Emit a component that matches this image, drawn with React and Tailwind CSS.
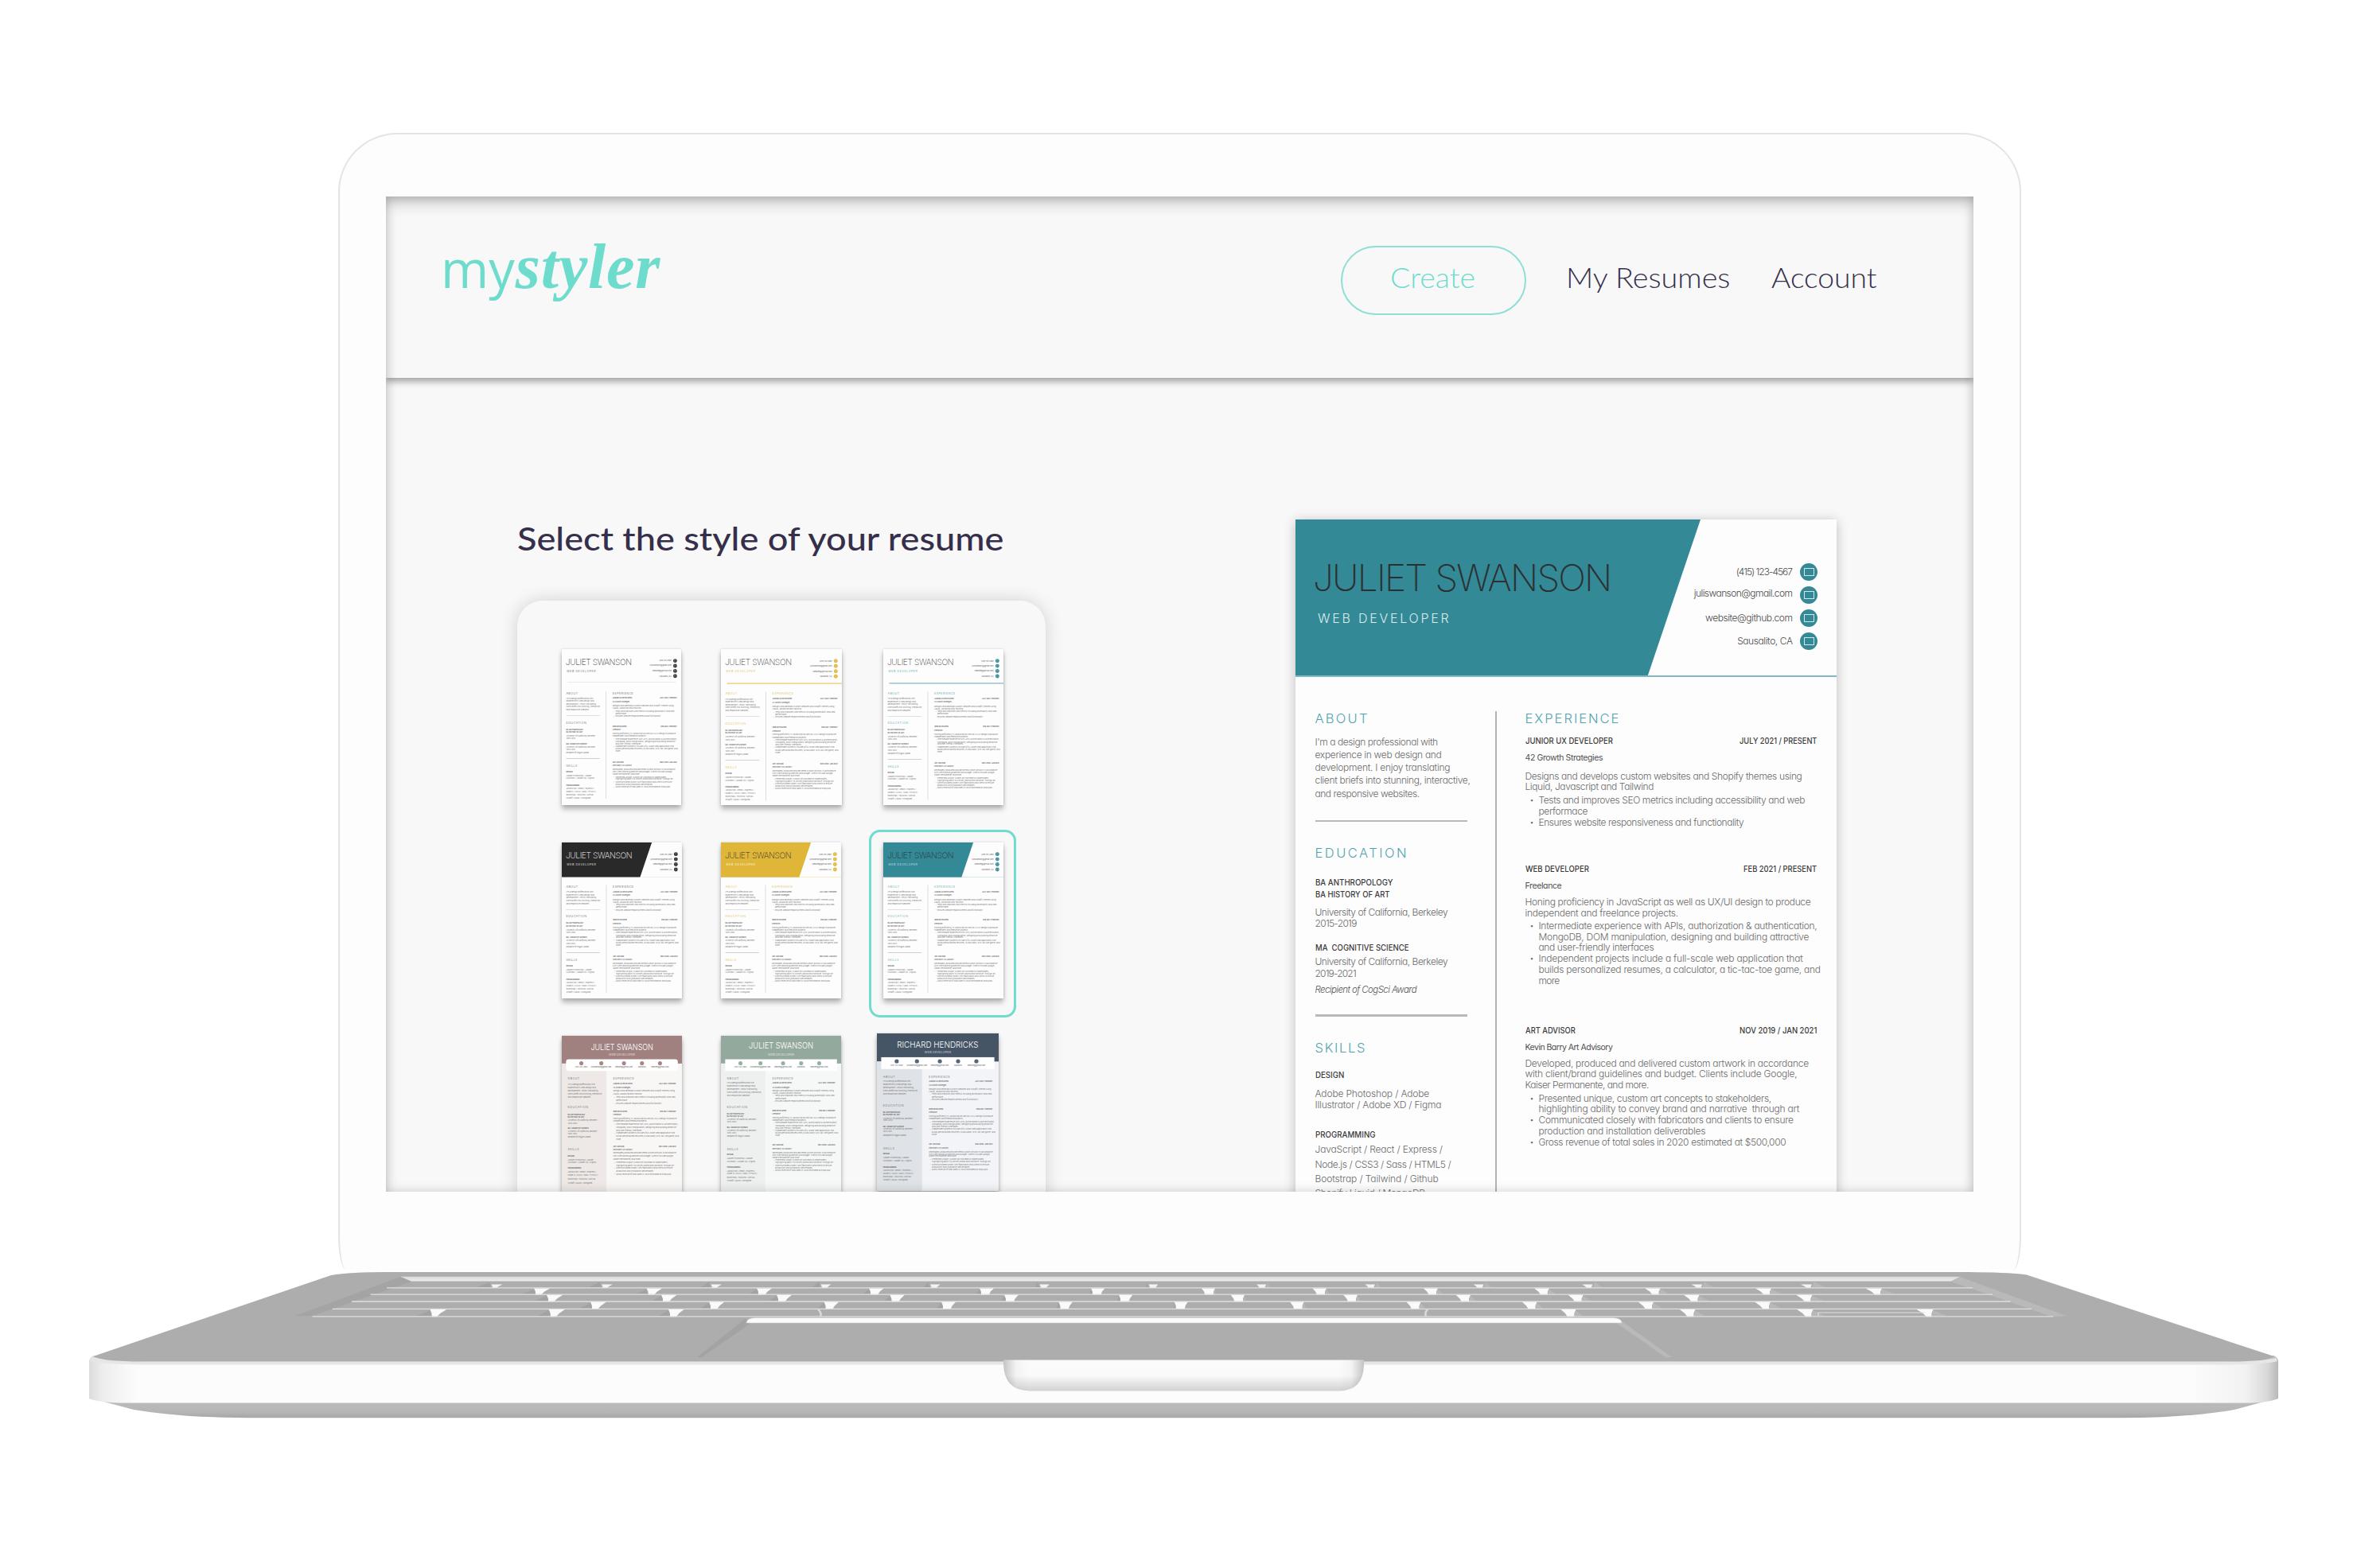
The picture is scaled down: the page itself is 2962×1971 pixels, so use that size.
import React, { useLayoutEffect, useRef } from "react";

/* Single-line text whose ink spans `w` pixels, by tracking or by stretching the letters. */
function Fit({ w, stretch = false, className = "", children }) {
  const ref = useRef(null);
  useLayoutEffect(() => {
    const el = ref.current;
    el.style.letterSpacing = "0px";
    el.style.marginRight = "0px";
    const natural = el.offsetWidth;
    if (stretch) {
      el.style.transform = `scaleX(${w / natural})`;
      el.style.marginRight = w - natural + "px";
      return;
    }
    const ls = (w - natural) / Math.max(1, el.textContent.length - 1);
    el.style.letterSpacing = ls + "px";
    el.style.marginRight = -ls + "px";
  });
  return (
    <span ref={ref} className={"inline-block origin-left whitespace-pre " + className}>
      {children}
    </span>
  );
}

/* ---------- resume content: [kind, text, width, date, dateWidth] ---------- */
const SIDE = [
  ["head", "ABOUT", 66],
  ["body", "I'm a design professional with", 154.5],
  ["body", "experience in web design and", 159],
  ["body", "development. I enjoy translating", 169.5],
  ["body", "client briefs into stunning, interactive,", 195],
  ["body", "and responsive websites.", 131.5],
  ["rule"],
  ["head", "EDUCATION", 115],
  ["bold", "BA ANTHROPOLOGY", 97],
  ["bold", "BA HISTORY OF ART", 93.5],
  ["body", "University of California, Berkeley", 167],
  ["body", "2015-2019", 52.5],
  ["bold", "MA  COGNITIVE SCIENCE", 117.5],
  ["body", "University of California, Berkeley", 167],
  ["body", "2019-2021", 52.5],
  ["ital", "Recipient of CogSci Award", 128],
  ["rule"],
  ["head", "SKILLS", 62.5],
  ["bold", "DESIGN", 36],
  ["body", "Adobe Photoshop / Adobe", 143.5],
  ["body", "Illustrator / Adobe XD / Figma", 159],
  ["bold", "PROGRAMMING", 76],
  ["body", "JavaScript / React / Express /", 161],
  ["body", "Node.js / CSS3 / Sass / HTML5 /", 171.5],
  ["body", "Bootstrap / Tailwind / Github", 155.5],
  ["body", "Shopify Liquid / MongoDB", 139],
];
const MAIN = [
  ["head", "EXPERIENCE", 118],
  ["bold", "JUNIOR UX DEVELOPER", 109.5, "JULY 2021 / PRESENT", 97.7],
  ["sub", "42 Growth Strategies", 98.5],
  ["body", "Designs and develops custom websites and Shopify themes using", 348],
  ["body", "Liquid, Javascript and Tailwind", 162],
  ["item", "Tests and improves SEO metrics including accessibility and web", 335],
  ["cont", "performace", 61.5],
  ["item", "Ensures website responsiveness and functionality", 258],
  ["bold", "WEB DEVELOPER", 80, "FEB 2021 / PRESENT", 92.5],
  ["sub", "Freelance", 46],
  ["body", "Honing proficiency in JavaScript as well as UX/UI design to produce", 359],
  ["body", "independent and freelance projects.", 193],
  ["item", "Intermediate experience with APIs, authorization & authentication,", 350],
  ["cont", "MongoDB, DOM manipulation, designing and building attractive", 340],
  ["cont", "and user-friendly interfaces", 145.5],
  ["item", "Independent projects include a full-scale web application that", 332.7],
  ["cont", "builds personalized resumes, a calculator, a tic-tac-toe game, and", 354.5],
  ["cont", "more", 27],
  ["bold", "ART ADVISOR", 63.3, "NOV 2019 / JAN 2021", 97.7],
  ["sub", "Kevin Barry Art Advisory", 110],
  ["body", "Developed, produced and delivered custom artwork in accordance", 357],
  ["body", "with client/brand guidelines and budget. Clients include Google,", 342],
  ["body", "Kaiser Permanente, and more.", 156],
  ["item", "Presented unique, custom art concepts to stakeholders,", 293],
  ["cont", "highlighting ability to convey brand and narrative  through art", 327.5],
  ["item", "Communicated closely with fabricators and clients to ensure", 320],
  ["cont", "production and installation deliverables", 209.5],
  ["item", "Gross revenue of total sales in 2020 estimated at $500,000", 311.5],
];

/* Baselines of each row, measured from the top edge of the resume sheet. */
const CLASSIC = {
  side: [256.5, 285, 301, 317, 333, 349.5, 381, 426, 461, 476.7, 498.7, 513.3, 543.3, 561, 575.7, 595.7, 625.5, 670.3, 703.3, 727, 740.7, 778.3, 797.3, 815.7, 834, 852.5],
  main: [256.5, 283.7, 304.7, 327.7, 341.3, 357.7, 371.5, 385.7, 444.3, 465, 485.7, 499.5, 515.7, 529.5, 543.3, 557, 571, 584.7, 647, 668.3, 688.7, 702.5, 716.3, 732.7, 746.5, 760.3, 774, 788],
};
const BANNER = {
  side: [249, 273, 290, 307, 324, 341, 360, 411, 446, 461, 479, 492, 524, 540, 554, 573, 600, 648, 678, 699, 716, 750, 769, 786, 806, 825],
  main: [249, 273, 296, 317, 329, 345, 359, 375, 428, 447, 468, 482, 498, 512, 527, 539, 555, 569, 623, 645, 666, 680, 692, 708, 722, 737, 752, 767],
};
const BANNER_LOOSE = {
  side: [249, 279, 298, 318, 336, 354, 372, 412, 450, 465, 484, 502, 528, 546, 561, 577, 600, 648, 684, 706, 721, 754, 774, 795, 817, 838],
  main: [249, 277, 298, 318, 333, 354, 370, 388, 432, 453, 472, 487, 507, 522, 540, 556, 573, 591, 630, 649, 669, 685, 702, 720, 738, 753, 771, 787],
};

const KIND = {
  head: "text-[16.5px] font-light",
  body: "text-[12px] font-light text-[#6a6a6a]",
  item: "text-[12px] font-light text-[#6a6a6a]",
  cont: "text-[12px] font-light text-[#6a6a6a]",
  ital: "text-[11.5px] italic font-light text-[#555]",
  sub: "text-[10.5px] font-normal text-[#505050]",
  bold: "text-[10.5px] font-medium text-[#3a3a3a]",
};
const SIZE = { head: 16.5, body: 12, item: 12, cont: 12, ital: 11.5, sub: 10.5, bold: 10.5, rule: 0 };

function Rows({ rows, baselines, headClass, ruleClass = "bg-[#b9b9b9]" }) {
  let edge = 0;
  return rows.map(([kind, text, w, date, dw], i) => {
    const bottom = baselines[i] - 0.5 - 0.364 * SIZE[kind];
    const height = bottom - edge;
    edge = bottom;
    if (kind === "rule")
      return (
        <div key={i} className="flex items-end" style={{ height }}>
          <div className={"h-[2.5px] w-[191px] " + ruleClass} />
        </div>
      );
    const indent = kind === "item" || kind === "cont";
    const caps = kind === "bold";
    return (
      <div key={i} className={"flex items-end justify-between leading-[0] " + KIND[kind]} style={{ height }}>
        <span className="flex items-end">
          {indent && <span className="w-[17px] pl-[6px] text-[9px]">{kind === "item" ? "•" : ""}</span>}
          <Fit w={w} stretch={caps} className={kind === "head" ? headClass : ""}>{text}</Fit>
        </span>
        {date && <Fit w={dw} stretch>{date}</Fit>}
      </div>
    );
  });
}

const CONTACTS = [
  ["(415) 123-4567", 71, "h-[28px]"],
  ["juliswanson@gmail.com", 124.6, "h-[29px]"],
  ["website@github.com", 109.5, "h-[29px]"],
  ["Sausalito, CA", 70, "h-[29px]"],
];

function Classic({ fill, name, role, head, dot, line }) {
  return (
    <div className="h-[888px] w-[680px] overflow-hidden bg-[#fdfdfd]">
      <div className="grid h-[198px]">
        <svg viewBox="0 0 680 198" className="col-start-1 row-start-1 h-[198px] w-[680px]">
          {fill && <path d="M0 0H509L442.500 197H0Z" className={fill} />}
          <path d={line.short ? "M34 188H648" : fill ? "M0 197H680" : "M34 193H680"} strokeWidth={line.short ? 2 : fill ? 2 : 5} className={line.cls} />
        </svg>
        <div className="col-start-1 row-start-1 flex justify-between pr-[24px]">
          <div className="pl-[22px] pt-[45px]">
            <Fit w={376} className={"block text-[46px] font-extralight leading-[56px] " + name}>JULIET SWANSON</Fit>
            <div className="pl-[6px] pt-[10px]">
              <Fit w={165} className={"text-[16px] font-light leading-[26px] " + role}>WEB DEVELOPER</Fit>
            </div>
          </div>
          <div className="pt-[52px]">
            {CONTACTS.map(([t, w, h], i) => (
              <div key={i} className={"flex items-center justify-end gap-[9px] " + h}>
                <Fit w={w} className={"text-[12px] font-light leading-[18px] text-[#4a4a4a]" + (i === 1 ? " pb-[4px]" : "")}>{t}</Fit>
                <span className={"flex size-[22px] items-center justify-center rounded-full " + dot}>
                  <span className="h-[10px] w-[13px] border-[1.5px] border-white/80" />
                </span>
              </div>
            ))}
          </div>
        </div>
      </div>
      <div className="-mt-[198px] flex">
        <div className="w-[251px] pl-[24.500px]">
          <Rows rows={SIDE} baselines={CLASSIC.side} headClass={head} />
        </div>
        <div className="mt-[241px] h-[610px] w-[1.5px] bg-[#b4b4b4]" />
        <div className="w-[403px] pl-[36px]">
          <Rows rows={MAIN} baselines={CLASSIC.main} headClass={head} />
        </div>
      </div>
    </div>
  );
}

const BADGES = [
  ["(415) 123-4567", "w-[66px]"],
  ["juliswanson@gmail.com", "w-[112px]"],
  ["website@github.com", "w-[96px]"],
  ["Sausalito", "w-[60px]"],
  ["website@github.com", "w-[96px]"],
];

function Banner({ band, dot, sideBg, mainBg, title, titleW, titlePad, metrics, barRound = "" }) {
  return (
    <div className={"h-[888px] w-[680px] overflow-hidden " + mainBg}>
      <div className={"flex h-[157px] flex-col items-center " + band}>
        <div className={titlePad}>
          <Fit w={titleW} stretch className="block text-[47px] font-light leading-[56px] text-white">{title}</Fit>
        </div>
        <Fit w={148} className="text-[17px] font-light leading-[26px] text-white/80">WEB DEVELOPER</Fit>
      </div>
      <div className={"relative z-10 mx-[24px] -mt-[24px] flex h-[66px] items-start justify-center gap-[24px] bg-white pt-[11px] " + barRound}>
        {BADGES.map(([t, w], i) => (
          <div key={i} className={"flex flex-col items-center gap-[3px] " + w}>
            <span className={"size-[23px] rounded-full " + dot} />
            <span className="whitespace-nowrap text-[10px] leading-[14px] text-[#555]">{t}</span>
          </div>
        ))}
      </div>
      <div className="-mt-[42px] flex h-[731px]">
        <div className={"h-[731px] w-[252px] pl-[34px] " + sideBg}>
          <div className="-mt-[157px]">
            <Rows rows={SIDE} baselines={metrics.side} headClass="text-[#5a6068]" ruleClass="bg-transparent" />
          </div>
        </div>
        <div className="-mt-[157px] w-[394px] pl-[38px]">
          <Rows rows={MAIN} baselines={metrics.main} headClass="text-[#5a6068]" />
        </div>
      </div>
    </div>
  );
}

const TEAL = { fill: "fill-[#338996]", name: "text-[#2b3033]", role: "text-[#dcebed]", head: "text-[#4fa3b0]", dot: "bg-[#338996]", line: { cls: "stroke-[#7fb9c2]" } };

function Thumb({ children, className = "w-[150px] h-[196px]", scale = "scale-[0.2208]", selected }) {
  return (
    <div className={"relative shrink-0 shadow-[0_5px_6px_rgba(0,0,0,0.28),0_0_3px_rgba(0,0,0,0.14)] " + className}>
      <div className="size-full overflow-hidden">
        <div className={"w-[680px] origin-top-left " + scale}>{children}</div>
      </div>
      {selected && <div className="absolute -bottom-[24px] -left-[18px] -right-[16px] -top-[16px] rounded-[14px] border-[3px] border-[#70dccd]" />}
    </div>
  );
}

/* ---------- laptop base ---------- */
const KEY_ROWS = [
  { y0: 1610.4, y1: 1619.4, l: 486, r: 2479, top: 1614.5, gaps: [623, 761.6, 899, 1037, 1174.5, 1312, 1449, 1585.7, 1722.5, 1859, 1996, 2133.7, 2271.4] },
  { y0: 1619.4, y1: 1627.7, l: 465.6, r: 2504, top: 1619.4, gaps: [679, 820.5, 959, 1100, 1239, 1379, 1519, 1659, 1799, 1938.8, 2078.6, 2218, 2357] },
  { y0: 1627.7, y1: 1636.6, l: 442, r: 2526.5, top: 1627.7, gaps: [695, 839, 984, 1126.4, 1270, 1414, 1556, 1698, 1840, 1981.6, 2127.5, 2269.4] },
  { y0: 1636.6, y1: 1645.9, l: 417.5, r: 2553, top: 1636.6, gaps: [750, 899, 1043.5, 1191, 1338.4, 1483.7, 1630.6, 1777.5, 1923.5, 2070, 2217] },
  { y0: 1645.9, y1: 1655.5, l: 392.6, r: 2580, top: 1645.9, gaps: [548.5, 697.7, 848, 1972.4, 2122.4, 2270.4, 2421.4] },
];

function wedge(x, y0, y1, small) {
  const k = (1484 - x) / 1000;
  const a = Math.abs(k);
  const s = k >= 0 ? 1 : -1;
  const f = small ? 0.7 : 1;
  const p = (dx, y) => `${x + s * dx * f},${y}`;
  return [p(-8, y0), p(9 + 4 * a, y0), p(6 - 1 * a, (y0 + y1) / 2), p(5 - 5 * a, y1 - 0.3), p(-6, y1 - 0.3), p(-6, (y0 + y1) / 2)].join(" ");
}
function shade(x, y0, y1) {
  const s = x < 1484 ? 1 : -1;
  const a = Math.abs(1484 - x) / 1000;
  const p = (dx, y) => `${x + s * dx},${y}`;
  return [p(-8, y0 + 1), p(-6, y1 - 1.5), p(-8 - 18 * a, y1 - 1.5)].join(" ");
}

function Base() {
  return (
    <svg viewBox="100 1596 2774 192" className="ml-[100px] h-[192px] w-[2774px]">
      <defs>
        <linearGradient id="under" x1="0" y1="0" x2="0" y2="1">
          <stop offset="0" stopColor="#bcbcbc" />
          <stop offset="0.7" stopColor="#b6b6b6" />
          <stop offset="1" stopColor="#a6a6a6" />
        </linearGradient>
        <linearGradient id="front" x1="0" y1="0" x2="1" y2="0">
          <stop offset="0" stopColor="#dcdcdc" />
          <stop offset="0.006" stopColor="#ededed" />
          <stop offset="0.022" stopColor="#fcfcfc" />
          <stop offset="0.96" stopColor="#fcfcfc" />
          <stop offset="0.985" stopColor="#f2f2f2" />
          <stop offset="0.995" stopColor="#d8d8d8" />
          <stop offset="1" stopColor="#b8b8b8" />
        </linearGradient>
        <linearGradient id="notch" x1="0" y1="0" x2="0" y2="1">
          <stop offset="0" stopColor="#fbfbfb" />
          <stop offset="0.5" stopColor="#fafafa" />
          <stop offset="1" stopColor="#d2d2d2" />
        </linearGradient>
        <linearGradient id="notchSide" x1="0" y1="0" x2="1" y2="0">
          <stop offset="0" stopColor="#000" stopOpacity="0.22" />
          <stop offset="0.035" stopColor="#000" stopOpacity="0.03" />
          <stop offset="0.07" stopColor="#000" stopOpacity="0" />
          <stop offset="0.93" stopColor="#000" stopOpacity="0" />
          <stop offset="0.965" stopColor="#000" stopOpacity="0.03" />
          <stop offset="1" stopColor="#000" stopOpacity="0.22" />
        </linearGradient>
        <linearGradient id="strip" x1="0" y1="0" x2="0" y2="1">
          <stop offset="0" stopColor="#d9d9d9" />
          <stop offset="1" stopColor="#ededed" />
        </linearGradient>
      </defs>
      <path d="M112 1757 L168 1772 Q230 1782 310 1782.300 H2665 Q2750 1782 2808 1772 L2863 1757 Z" fill="url(#under)" />
      <path d="M112 1712 Q112 1707 117 1704 H2858 Q2863 1707 2863 1712 V1758 Q2850 1763.500 2820 1763.500 H160 Q125 1763.500 112 1758 Z" fill="url(#front)" />
      <path d="M114 1709 Q130 1713 190 1713.500 H2790 Q2850 1713 2861 1709" fill="none" stroke="#e6e6e6" strokeWidth="4" />
      <path d="M416 1603 Q440 1599 486 1599 H2473 Q2530 1599.500 2547 1602.500 L2858 1705 Q2852 1711.500 2800 1711.500 H180 Q128 1711.500 117 1705 Z" fill="#adadad" />
      <path d="M503 1605 L371 1654 H392.600 L517 1611 Z" fill="#a4a4a4" />
      <path d="M2463 1605 L2597 1654 L2580 1655.500 L2452 1611 Z" fill="#b9b9b9" />
      <path d="M503 1604.800 H2463 L2452 1610.400 H517 Z" fill="url(#strip)" />
      {KEY_ROWS.map((r, i) => (
        <g key={i}>
          {r.gaps.map((x) => (
            <g key={x}>
              <polygon points={wedge(x, r.top, r.y1, i === 0)} fill={i === 0 ? "#f4f4f4" : "#fafafa"} />
              <polygon points={shade(x, r.y0, r.y1)} fill={x < 1484 ? "#a2a2a2" : "#b8b8b8"} />
            </g>
          ))}
          <path d={`M${r.l} ${r.y1 - 0.6}H${r.r}`} stroke="#e0e0e0" strokeWidth="1.300" />
        </g>
      ))}
      <path d="M1028 1646 Q1033 1650 1031 1655" fill="none" stroke="#dadada" strokeWidth="2.500" />
      <path d="M1794 1646 Q1790 1650 1792 1655" fill="none" stroke="#dadada" strokeWidth="2.500" />
      <path d="M2285 1654 V1650 H2419" fill="none" stroke="#e0e0e0" strokeWidth="1.200" />
      <path d="M936 1658 L876 1706 H882 L945 1662 Z" fill="#a3a3a3" />
      <path d="M2034 1658 L2101 1706 H2093 L2030 1662 Z" fill="#b9b9b9" />
      <path d="M938 1663 Q938 1656.500 950 1656.500 H2026 Q2038 1656.500 2038 1663 Z" fill="#fbfbfb" stroke="#cfcfcf" strokeWidth="0.600" />
      <path d="M1261 1709.500 H1714 Q1716 1748.400 1682 1748.400 H1294 Q1260 1748.400 1261 1709.500 Z" fill="url(#notch)" />
      <path d="M1261 1709.500 H1714 Q1716 1748.400 1682 1748.400 H1294 Q1260 1748.400 1261 1709.500 Z" fill="url(#notchSide)" />
    </svg>
  );
}

export default function App() {
  return (
    <div className="flex h-[1971px] w-[2962px] flex-col overflow-hidden bg-white pt-[167px] font-['Inter',sans-serif] [font-feature-settings:'cv11'_1]">
      {/* lid */}
      <div className="ml-[425px] h-[1429px] w-[2115px] shrink-0 rounded-t-[74px] rounded-b-[10px_44px] border-2 border-b-0 border-[#e4e4e4] bg-[#fdfdfd] pl-[58px] pt-[78px] [border-bottom-left-radius:10px_44px] [border-bottom-right-radius:10px_44px]">
        <div className="relative flex h-[1251px] w-[1995px] flex-col overflow-hidden bg-[#f8f8f8]">
          <header className="flex h-[228px] shrink-0 items-baseline justify-between pl-[69px] pr-[121px] pt-[48px] shadow-[0_3px_9px_1px_rgba(0,0,0,0.38)]">
            <div className="flex items-baseline leading-[80px] text-[#6edccd]">
              <Fit w={93} className="font-['Open_Sans',sans-serif] text-[65px] font-medium">my</Fit>
              <Fit w={182} className="ml-[1px] font-['Liberation_Serif',serif] text-[80px] font-bold italic">styler</Fit>
            </div>
            <nav className="flex items-baseline font-['Lato',sans-serif] text-[35px] font-light leading-[42px] text-[#352f4b]">
              <div className="w-[233px] rounded-full border-2 border-[#8fdfd4] pb-[25px] pl-[60px] pt-[16px] text-[#6edccd]">
                <Fit w={107} stretch>Create</Fit>
              </div>
              <Fit w={206} stretch className="ml-[50px]">My Resumes</Fit>
              <Fit w={133} stretch className="ml-[52px]">Account</Fit>
            </nav>
          </header>
          <main className="flex items-start pl-[165px] pt-px">
            <section className="w-[664px] pt-[177px]">
              <h1 className="font-['Lato',sans-serif] text-[41px] font-medium leading-[48px] text-[#352f4b]">
                <Fit w={611} stretch>Select the style of your resume</Fit>
              </h1>
              <div className="mt-[54px] flex h-[860px] flex-col gap-[47px] rounded-[32px] bg-[#f8f8f8] pl-[56px] pt-[61px] shadow-[0_0_22px_rgba(0,0,0,0.16)]">
                <div className="flex">
                  <Thumb><Classic name="text-[#333]" role="text-[#555]" head="text-[#555]" dot="bg-[#333]" line={{ cls: "stroke-[#cfcfcf]", short: true }} /></Thumb>
                  <Thumb className="ml-[50px] h-[196px] w-[152px]" scale="scale-[0.2237]"><Classic name="text-[#444]" role="text-[#e0b63a]" head="text-[#e0b63a]" dot="bg-[#e0b63a]" line={{ cls: "stroke-[#ecc868]" }} /></Thumb>
                  <Thumb className="ml-[52px] h-[196px] w-[151px]" scale="scale-[0.2222]"><Classic name="text-[#444]" role="text-[#3f9aa8]" head="text-[#3f9aa8]" dot="bg-[#338996]" line={{ cls: "stroke-[#7fb9c2]" }} /></Thumb>
                </div>
                <div className="flex">
                  <Thumb className="h-[196px] w-[151px]" scale="scale-[0.2222]"><Classic fill="fill-[#292929]" name="text-white" role="text-white" head="text-[#555]" dot="bg-[#292929]" line={{ cls: "stroke-[#d5d5d5]" }} /></Thumb>
                  <Thumb className="ml-[49px] h-[196px] w-[151px]" scale="scale-[0.2222]"><Classic fill="fill-[#dfb638]" name="text-[#333]" role="text-white" head="text-[#e0b63a]" dot="bg-[#dfb638]" line={{ cls: "stroke-[#ecc868]" }} /></Thumb>
                  <Thumb className="ml-[53px] h-[196px] w-[151px]" scale="scale-[0.2222]" selected><Classic {...TEAL} /></Thumb>
                </div>
                <div className="flex items-start">
                  <Thumb className="h-[196px] w-[151px]" scale="scale-[0.2222]">
                    <Banner band="bg-[#a08180]" dot="bg-[#a98685]" sideBg="bg-[#eee9e7]" mainBg="bg-[#f9f6f6]" title="JULIET SWANSON" titleW={353} titlePad="pt-[37px]" metrics={BANNER_LOOSE} barRound="rounded-[14px]" />
                  </Thumb>
                  <Thumb className="ml-[49px] h-[196px] w-[151px]" scale="scale-[0.2222]">
                    <Banner band="bg-[#94a99d]" dot="bg-[#94b3a6]" sideBg="bg-[#edf0ef]" mainBg="bg-[#f6f8f8]" title="JULIET SWANSON" titleW={364} titlePad="pt-[25px] pb-[12px]" metrics={BANNER} />
                  </Thumb>
                  <Thumb className="-mt-[3px] ml-[45px] h-[198px] w-[153px]" scale="scale-[0.225]">
                    <Banner band="bg-[#455566]" dot="bg-[#55657a]" sideBg="bg-[#dfe2e6]" mainBg="bg-[#f3f4f7]" title="RICHARD HENDRICKS" titleW={455} titlePad="pt-[37px]" metrics={BANNER} />
                  </Thumb>
                </div>
              </div>
            </section>
            <section className="ml-[314px] mt-[177px] h-[888px] w-[680px] shrink-0 shadow-[0_2px_14px_rgba(0,0,0,0.24)]">
              <Classic {...TEAL} />
            </section>
          </main>
          <div className="pointer-events-none absolute inset-0 shadow-[inset_0_12px_20px_-6px_rgba(0,0,0,0.24),inset_0_0_14px_rgba(0,0,0,0.18)]" />
        </div>
      </div>
      <Base />
    </div>
  );
}
